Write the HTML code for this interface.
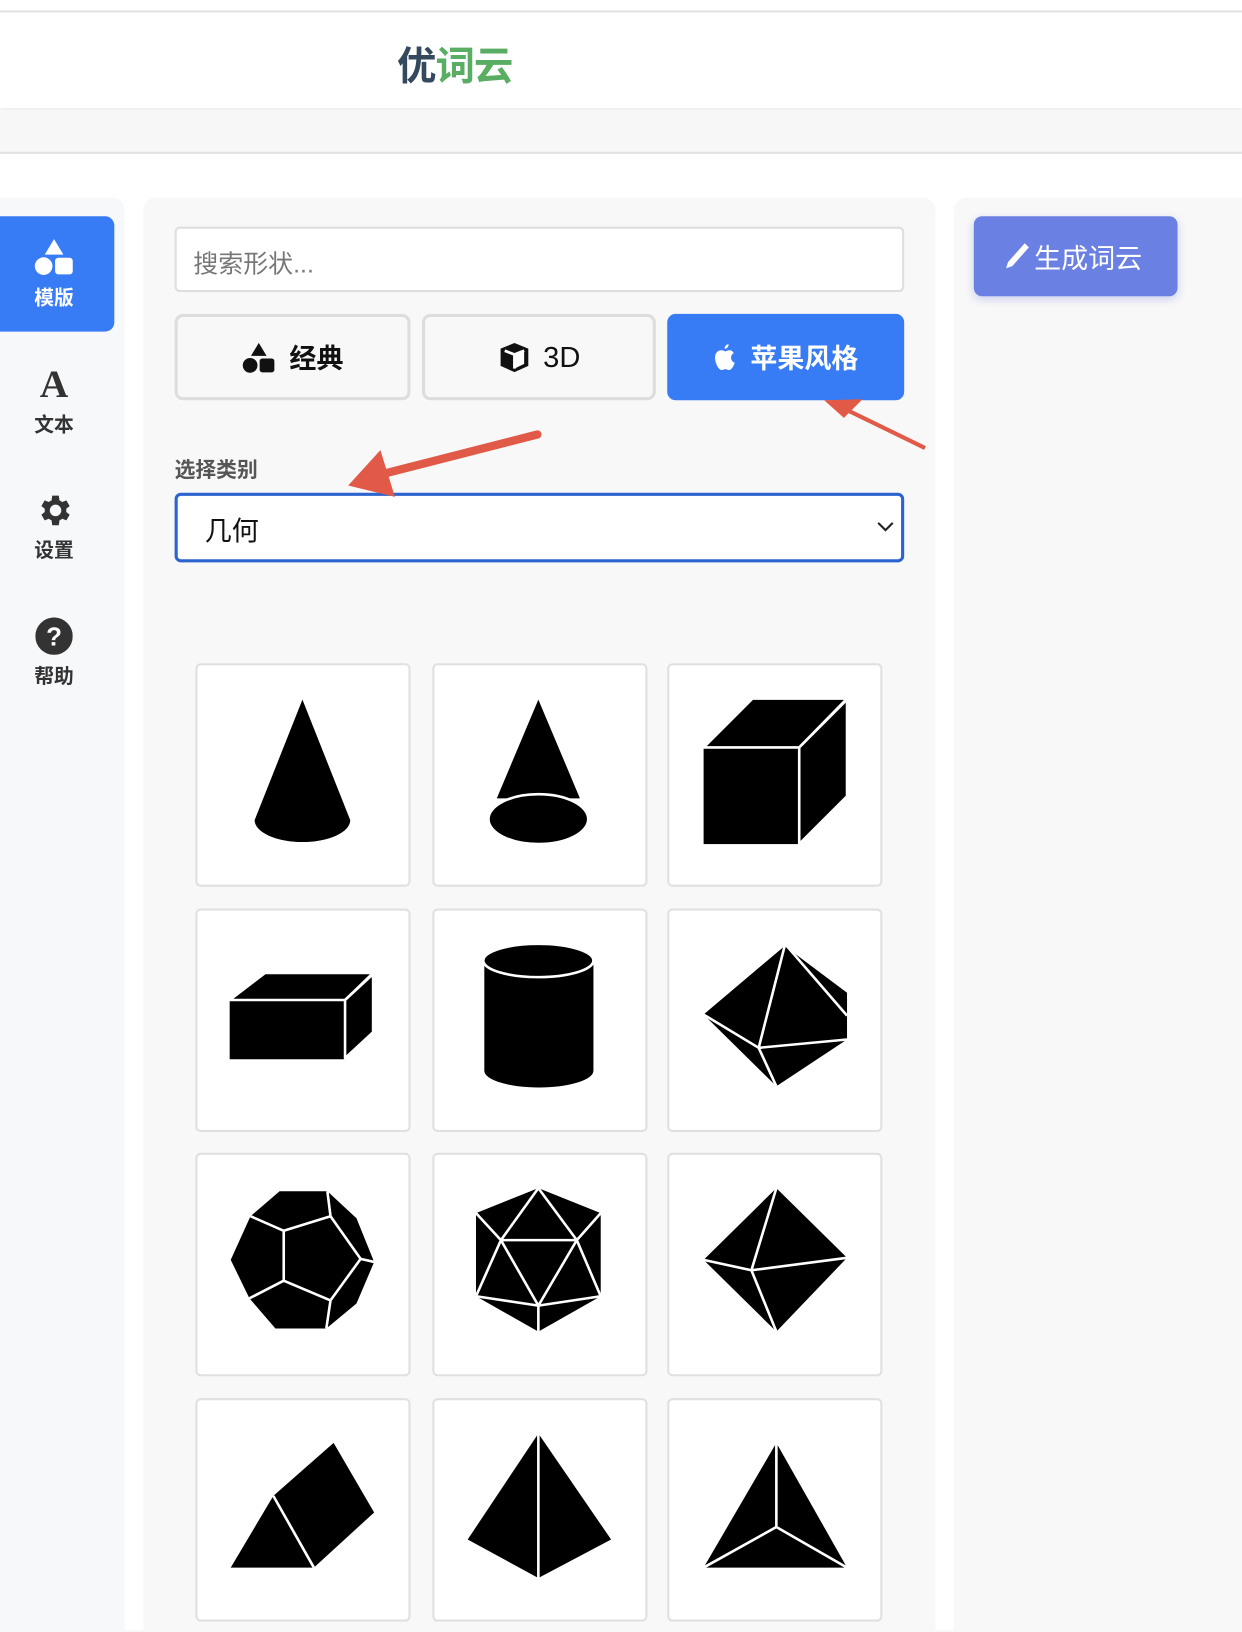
<!DOCTYPE html>
<html><head><meta charset="utf-8"><style>
*{box-sizing:border-box;margin:0;padding:0}
html,body{width:1242px;height:1630px;overflow:hidden;background:#f8f8f8;font-family:"Liberation Sans","Noto Sans CJK SC",sans-serif}
#w{position:absolute;left:0;top:0;width:1195px;height:1568px;transform:scale(1.0393,1.0395);transform-origin:0 0;background:#fff}
.a{position:absolute}
.card{position:absolute;width:207px;height:215px;background:#fff;border:2px solid #e0e0e0;border-radius:5px}
.btn{position:absolute;top:302px;height:83px;border:3px solid #ddd;border-radius:8px;background:#f8f8f8;display:flex;align-items:center;justify-content:center;font-size:26px;font-weight:bold;color:#111;gap:12px}
.si{position:absolute;left:0;width:104px;text-align:center;font-size:19px;color:#333;font-weight:bold}
</style></head><body><div id="w">
<div class="a" style="left:0;top:0;width:1195px;height:12px;background:#fff;border-bottom:2px solid #e2e2e2"></div>
<div class="a" style="left:0;top:14px;width:1195px;height:90px;background:#fff;box-shadow:0 2px 3px rgba(0,0,0,.1)"></div>
<div class="a" style="left:382px;top:33px;font-size:38px;font-weight:bold;letter-spacing:-1px"><span style="color:#34495e">优</span><span style="color:#5aae63">词云</span></div>
<div class="a" style="left:0;top:106px;width:1195px;height:42px;background:#f7f7f7;border-bottom:2px solid #e2e2e2"></div>
<div class="a" style="left:0;top:150px;width:1195px;height:1418px;background:#fff"></div>
<!-- sidebar -->
<div class="a" style="left:0;top:190px;width:120px;height:1380px;background:#f7f8fa;border-radius:0 12px 0 0"></div>
<div class="a" style="left:0;top:208px;width:110px;height:111px;background:#377bf5;border-radius:0 9px 9px 0"></div>
<svg class="a" style="left:33px;top:229px" width="38" height="36" viewBox="0 0 38 36"><path d="M19 1 L28 16 L10 16Z" fill="#fff"/><circle cx="9" cy="27" r="8.5" fill="#fff"/><rect x="20" y="19" width="17" height="16" rx="3" fill="#fff"/></svg>
<div class="si" style="top:272px;color:#fff;left:0">模版</div>
<div class="si" style="top:348px;font-family:'Liberation Serif',serif;font-size:38px;color:#333">A</div>
<div class="si" style="top:394px">文本</div>
<svg class="a" style="left:33px;top:472px" width="38" height="38" viewBox="0 0 24 24"><path fill="#333" d="M19.4 13a7.5 7.5 0 000-2l2.1-1.6-2-3.5-2.5 1a7.6 7.6 0 00-1.7-1L14.9 3h-4l-.4 2.9a7.6 7.6 0 00-1.7 1l-2.5-1-2 3.5L6.4 11a7.5 7.5 0 000 2l-2.1 1.6 2 3.5 2.5-1a7.6 7.6 0 001.7 1l.4 2.9h4l.4-2.9a7.6 7.6 0 001.7-1l2.5 1 2-3.5zM12.9 15.5a3.5 3.5 0 110-7 3.5 3.5 0 010 7z"/></svg>
<div class="si" style="top:515px">设置</div>
<svg class="a" style="left:34px;top:594px" width="36" height="36" viewBox="0 0 36 36"><circle cx="18" cy="18" r="18" fill="#333"/><text x="18" y="27" text-anchor="middle" font-family="Liberation Sans" font-weight="bold" font-size="25" fill="#fff">?</text></svg>
<div class="si" style="top:636px">帮助</div>
<!-- main -->
<div class="a" style="left:138px;top:190px;width:762px;height:1380px;background:#f8f8f8;border-radius:12px 12px 0 0"></div>
<div class="a" style="left:168px;top:218px;width:702px;height:63px;background:#fff;border:2px solid #dedede;border-radius:5px;font-size:24px;color:#777;padding:14px 16px">搜索形状...</div>
<div class="btn" style="left:168px;width:227px"><svg width="34" height="30" viewBox="0 0 38 36"><path d="M19 1 L28 16 L10 16Z" fill="#111"/><circle cx="9" cy="27" r="8.5" fill="#111"/><rect x="20" y="19" width="17" height="16" rx="3" fill="#111"/></svg>经典</div>
<div class="btn" style="left:406px;width:225px;font-weight:normal;font-size:28px;font-family:'Liberation Sans',sans-serif"><svg width="32" height="32" viewBox="0 0 24 24"><path d="M12 1.5 L22 5.5 L22 18 L12 22.5 L2 18 L2 5.5Z" fill="#111"/><path d="M5 7 L12 9.8 L19 7 M12 9.8 V20" stroke="#fff" stroke-width="2" fill="none"/><path d="M12 9.8 L19 7 L19 16.5 L12 20Z" fill="#fff"/></svg>3D</div>
<div class="btn" style="left:642px;width:228px;background:#377bf5;border-color:#377bf5;color:#fff"><svg width="24" height="28" viewBox="0 0 24 28"><path fill="#fff" d="M16 7c-1.8 0-3 1-4 1s-2.3-1-4-1C4.7 7 2 9.6 2 14c0 5 3.3 12 6.5 12 1.4 0 2.2-.9 3.5-.9s2 .9 3.5.9c2.5 0 4.6-4.5 5.5-7-2.5-1-3.6-3-3.6-5 0-2 1.2-3.4 2.6-4.300C19 7.7 17.5 7 16 7zM15 1c-2 .2-4 2-3.7 4.6 2-.1 3.9-2 3.7-4.6z"/></svg>苹果风格</div>
<div class="a" style="left:168px;top:436px;font-size:20px;font-weight:bold;color:#555">选择类别</div>
<div class="a" style="left:168px;top:474px;width:702px;height:67px;background:#fff;border:3px solid #2b63cf;border-radius:6px;font-size:26px;color:#111;padding:14px 26px">几何</div>
<svg class="a" style="left:843px;top:500px" width="18" height="12" viewBox="0 0 18 12"><path d="M2 3 L9 10 L16 3" stroke="#222" stroke-width="2" fill="none"/></svg>
<!-- arrows -->
<svg class="a" style="left:0;top:0" width="1195" height="600" viewBox="0 0 1195 600">
<path d="M517 418 L372 455" stroke="#e05a47" stroke-width="8" stroke-linecap="round"/>
<path d="M335 467 L366 433 L380 478Z" fill="#e05a47"/>
<path d="M890 431 L812 393" stroke="#e05a47" stroke-width="4"/>
<path d="M793 385 L830 384 L812 402Z" fill="#e05a47"/>
</svg>
<!-- right -->
<div class="a" style="left:918px;top:190px;width:277px;height:1380px;background:#f8f8f8;border-radius:12px 0 0 0"></div>
<div class="a" style="left:937px;top:208px;width:196px;height:77px;background:#6b80e3;border-radius:8px;box-shadow:0 3px 8px rgba(100,120,220,.3);color:#fff;font-size:26px;padding:21px 0 0 30px"><svg width="26" height="28" viewBox="0 0 26 28" style="position:absolute;left:29px;top:24px"><path d="M20 2 L24 6 L8 24 L2 26 L4 20Z" fill="#fff"/></svg><span style="margin-left:28px">生成词云</span></div>
<!-- cards -->
<div class="card" style="left:188px;top:638px"></div><div class="card" style="left:416px;top:638px"></div><div class="card" style="left:642px;top:638px"></div>
<div class="card" style="left:188px;top:874px"></div><div class="card" style="left:416px;top:874px"></div><div class="card" style="left:642px;top:874px"></div>
<div class="card" style="left:188px;top:1109px"></div><div class="card" style="left:416px;top:1109px"></div><div class="card" style="left:642px;top:1109px"></div>
<div class="card" style="left:188px;top:1345px"></div><div class="card" style="left:416px;top:1345px"></div><div class="card" style="left:642px;top:1345px"></div>
<svg class="a" style="left:0;top:0" width="1195" height="1568" viewBox="0 0 1195 1568">
<g fill="#000" stroke="#fff" stroke-width="2.5" stroke-linejoin="round">
<path d="M291 673 L245 789 A46 21 0 0 0 337 789Z" stroke="none"/>
<path d="M518 673 L478 768 L558 768Z" stroke="none"/>
<ellipse cx="518" cy="788" rx="48" ry="24"/>
<rect x="677" y="719" width="92" height="93" stroke="none"/>
<path d="M677 719 L724 672 L815 672 L769 719Z"/>
<path d="M769 719 L815 673 L815 766 L769 812Z"/>
<rect x="221" y="962" width="111" height="57" stroke="none"/>
<path d="M221 962 L255 936 L359 936 L332 962Z"/>
<path d="M332 962 L359 937 L359 993 L332 1018Z"/>
<path d="M466 924 L466 1030 A52 16 0 0 0 571 1030 L571 924Z" stroke="none"/>
<ellipse cx="518" cy="924" rx="53" ry="16"/>
<path d="M677 976 L755 910 L815 955 L815 1000 L747 1045Z" stroke="none"/>
<path d="M755 910 L730 1008 L677 976 M730 1008 L815 1000 M730 1008 L747 1045 M757 910 L815 977" fill="none"/>
<path d="M269 1146 L315 1146 L343 1172 L360 1214 L343 1254 L314 1278 L265 1278 L240 1249 L222 1212 L241 1170Z" stroke="none"/>
<path d="M273 1184 L318 1170 L347 1211 L318 1251 L273 1232 Z M273 1184 L241 1170 M318 1170 L315 1146 M347 1211 L360 1214 M318 1251 L314 1278 M273 1232 L240 1249" fill="none"/>
<path d="M518 1143 L578 1167 L578 1247 L518 1281 L458 1247 L458 1167Z" stroke="none"/>
<path d="M518 1143 L482 1193 L555 1193 Z M482 1193 L518 1256 L555 1193 M458 1167 L482 1193 L458 1247 L518 1256 L578 1247 L555 1193 L578 1167 M518 1256 L518 1281" fill="none"/>
<path d="M747 1143 L815 1210 L747 1281 L677 1212Z" stroke="none"/>
<path d="M747 1143 L723 1222 L747 1281 M677 1212 L723 1222 L815 1210" fill="none"/>
<path d="M222 1508 L263 1439 L321 1388 L360 1455 L302 1508Z" stroke="none"/>
<path d="M263 1439 L302 1508" fill="none"/>
<path d="M518 1379 L588 1481 L518 1518 L450 1481Z" stroke="none"/>
<path d="M518 1379 L518 1518" fill="none"/>
<path d="M747 1388 L815 1508 L677 1508Z" stroke="none"/>
<path d="M747 1388 L747 1469 L677 1508 M747 1469 L815 1508" fill="none"/>
</g></svg>
</div></body></html>
